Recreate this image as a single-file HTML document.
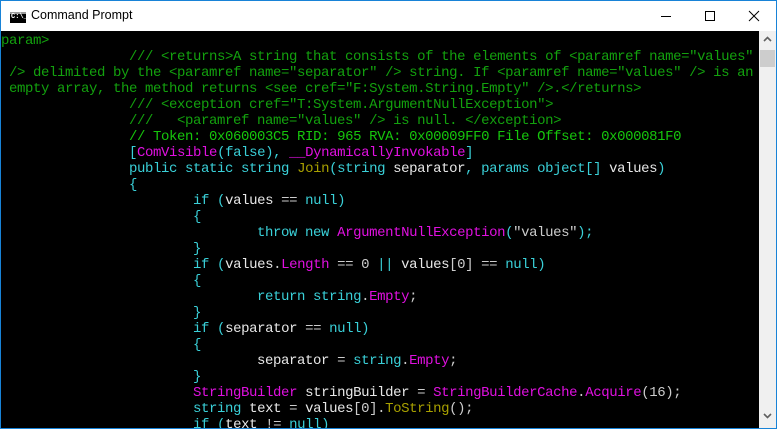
<!DOCTYPE html>
<html><head><meta charset="utf-8"><style>
body{margin:0;width:777px;height:429px;overflow:hidden;background:#fff;position:relative;font-family:"Liberation Sans",sans-serif}
.win{position:absolute;left:0;top:0;width:775px;height:427px;border:1px solid #1883d7;background:#fff}
.title{position:absolute;left:30px;top:7px;font-size:12.5px;color:#000}
.icon{position:absolute;left:9px;top:11px;width:16px;height:11px;background:#000;box-sizing:border-box;border-top:2px solid #9a9a9a}
.icon span{position:absolute;left:1px;top:-1px;font:7px "Liberation Mono",monospace;color:#fff;font-weight:bold}
.term{position:absolute;left:1px;top:31px;width:758px;height:397px;background:#000;overflow:hidden}
pre{margin:0;position:absolute;left:0;top:2px;font:14px/16px "Liberation Mono",monospace;letter-spacing:-0.4px;color:#cccccc;white-space:pre}
.g{color:#13a10e}.G{color:#16c60c}.c{color:#3ad0d8}.m{color:#e010e0}.y{color:#a8a000}.w{color:#e8e8e8}
.sb{position:absolute;left:759px;top:31px;width:17px;height:397px;background:#f0f0f0}
.thumb{position:absolute;left:1px;top:19px;width:15px;height:17px;background:#cdcdcd}
</style></head><body>
<div class="win">
<div class="icon"><span>C:\_</span></div>
<div class="title">Command Prompt</div>
<svg style="position:absolute;left:660px;top:8px" width="100" height="16">
<line x1="0" y1="7.5" x2="10" y2="7.5" stroke="#000"/>
<rect x="44.5" y="2.5" width="9" height="9" fill="none" stroke="#000"/>
<path d="M88 2 L98 12 M98 2 L88 12" stroke="#000"/>
</svg>
</div>
<div class="term"><pre><span class="g">param&gt;
                /// &lt;returns&gt;A string that consists of the elements of &lt;paramref name="values"
 /&gt; delimited by the &lt;paramref name="separator" /&gt; string. If &lt;paramref name="values" /&gt; is an
 empty array, the method returns &lt;see cref="F:System.String.Empty" /&gt;.&lt;/returns&gt;
                /// &lt;exception cref="T:System.ArgumentNullException"&gt;
                ///   &lt;paramref name="values" /&gt; is null. &lt;/exception&gt;</span>
                <span class="G">// Token: 0x060003C5 RID: 965 RVA: 0x00009FF0 File Offset: 0x000081F0</span>
                <span class="c">[</span><span class="m">ComVisible</span><span class="c">(false), </span><span class="m">__DynamicallyInvokable</span><span class="c">]</span>
                <span class="c">public static string </span><span class="y">Join</span><span class="c">(string </span><span class="w">separator</span><span class="c">, params object[] </span><span class="w">values</span><span class="c">)</span>
                <span class="c">{</span>
                        <span class="c">if (</span><span class="w">values</span> == <span class="c">null)</span>
                        <span class="c">{</span>
                                <span class="c">throw new </span><span class="m">ArgumentNullException</span><span class="c">(</span>"values"<span class="c">);</span>
                        <span class="c">}</span>
                        <span class="c">if (</span><span class="w">values</span>.<span class="m">Length</span> == 0 <span class="c">||</span> <span class="w">values</span>[0] == <span class="c">null)</span>
                        <span class="c">{</span>
                                <span class="c">return string</span>.<span class="m">Empty</span>;
                        <span class="c">}</span>
                        <span class="c">if (</span><span class="w">separator</span> == <span class="c">null)</span>
                        <span class="c">{</span>
                                <span class="w">separator</span> = <span class="c">string</span>.<span class="m">Empty</span>;
                        <span class="c">}</span>
                        <span class="m">StringBuilder</span> <span class="w">stringBuilder</span> = <span class="m">StringBuilderCache</span>.<span class="m">Acquire</span>(16);
                        <span class="c">string</span> <span class="w">text</span> = <span class="w">values</span>[0].<span class="y">ToString</span>();
                        <span class="c">if (</span><span class="w">text</span> != <span class="c">null)</span></pre></div>
<div class="sb">
<svg style="position:absolute;left:4px;top:5px" width="9" height="6"><path d="M1 5 L4.5 1.5 L8 5" stroke="#606060" stroke-width="1.6" fill="none"/></svg>
<div class="thumb"></div>
<svg style="position:absolute;left:4px;top:382px" width="9" height="6"><path d="M1 1 L4.5 4.5 L8 1" stroke="#606060" stroke-width="1.6" fill="none"/></svg>
</div>
</body></html>
